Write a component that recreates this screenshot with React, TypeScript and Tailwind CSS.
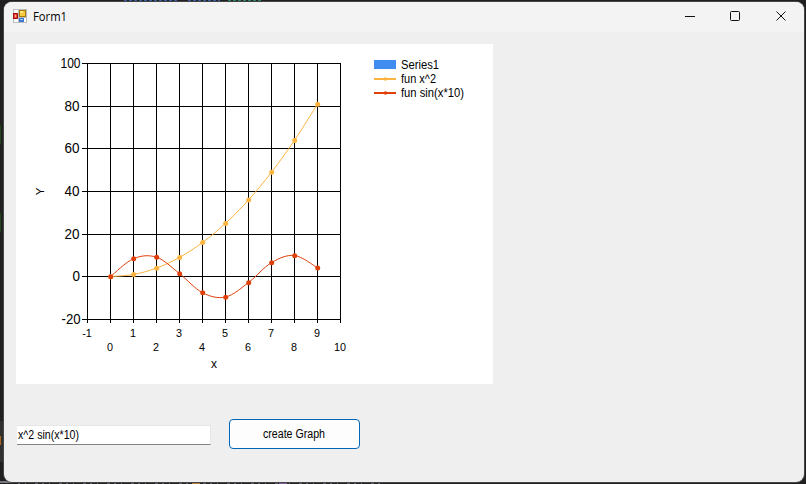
import React from "react";

const squares = [0, 1, 4, 9, 16, 25, 36, 49, 64, 81];
const sines = squares.map((_, x) => Math.sin(x) * 10);

const px = (x: number) => 94.5 + 23 * x;
const py = (v: number) => 232.6 - v * 2.13;

// Cardinal spline through the points, tension 0.5.
function spline(values: number[]) {
  const p = values.map((v, i) => [px(i), py(v)]);
  let d = `M${p[0][0]} ${p[0][1]}`;
  for (let i = 0; i < p.length - 1; i++) {
    const a = p[Math.max(0, i - 1)];
    const b = p[i];
    const c = p[i + 1];
    const e = p[Math.min(p.length - 1, i + 2)];
    d += ` C${b[0] + (c[0] - a[0]) / 6} ${b[1] + (c[1] - a[1]) / 6} ${c[0] - (e[0] - b[0]) / 6} ${c[1] - (e[1] - b[1]) / 6} ${c[0]} ${c[1]}`;
  }
  return d;
}

function Series({ values, color }: { values: number[]; color: string }) {
  return (
    <g>
      <path d={spline(values)} fill="none" stroke={color} strokeWidth="1" />
      {values.map((v, i) => (
        <circle key={i} cx={px(i) + 0.2} cy={py(v) + 0.1} r="2.5" fill={color} />
      ))}
    </g>
  );
}

const rows = [
  { y: 19, label: "100", x: 45, w: 20 },
  { y: 62, label: "80", x: 49, w: 15 },
  { y: 104, label: "60", x: 49, w: 15 },
  { y: 147, label: "40", x: 49, w: 15 },
  { y: 190, label: "20", x: 49, w: 15 },
  { y: 232, label: "0", x: 57, w: 7.5 },
  { y: 275, label: "-20", x: 46, w: 19 },
];

function Chart() {
  return (
    <svg width="350" height="340" className="block shrink-0 font-['Liberation_Sans',Arial,sans-serif]" fill="#000">
      <g shapeRendering="crispEdges">
        {rows.map((r) => (
          <rect key={r.label} x="66" y={r.y} width="259" height="1" />
        ))}
        {Array.from({ length: 12 }, (_, i) => (
          <rect key={i} x={71 + 23 * i} y="19" width="1" height="260" />
        ))}
      </g>
      {rows.map((r) => (
        <text key={r.label} x={r.x - 0.5} y={r.y + 5} fontSize="14" textLength={r.w} lengthAdjust="spacingAndGlyphs">
          {r.label}
        </text>
      ))}
      {Array.from({ length: 12 }, (_, i) => {
        const label = String(i - 1);
        return (
          <text key={i} x={71 + 23 * i} y={i % 2 ? 307 : 293} fontSize="10.8" textAnchor="middle">
            {label}
          </text>
        );
      })}
      <text x="198" y="324" fontSize="12" textAnchor="middle">x</text>
      <text transform="translate(28 147.5) rotate(-90)" fontSize="11.5" textAnchor="middle">Y</text>
      <Series values={squares} color="#fcb441" />
      <Series values={sines} color="#e0400a" />
    </svg>
  );
}

function Label({ text, width, size = 12 }: { text: string; width: number; size?: number }) {
  return (
    <svg width={width + 2} height="16" className="block shrink-0 overflow-visible">
      <text x="0" y="12" fontSize={size} textLength={width} lengthAdjust="spacingAndGlyphs">
        {text}
      </text>
    </svg>
  );
}

function LineKey({ color }: { color: string }) {
  return (
    <svg width="22" height="9" className="mb-[2px] block shrink-0" fill={color}>
      <rect y="4" width="22" height="2" shapeRendering="crispEdges" />
      <circle cx="11.5" cy="5" r="1.8" />
    </svg>
  );
}

function Legend() {
  return (
    <div className="flex flex-col pl-2 pt-[14px] font-['Liberation_Sans',Arial,sans-serif]">
      <div className="flex h-[14px] items-center gap-[5px]">
        <div className="mb-[2px] h-[9px] w-[22px] bg-[#418cf0]" />
        <Label text="Series1" width={38} />
      </div>
      <div className="flex h-[14px] items-center gap-[5px]">
        <LineKey color="#fcb441" />
        <Label text="fun x^2" width={35} />
      </div>
      <div className="flex h-[14px] items-center gap-[5px]">
        <LineKey color="#e0400a" />
        <Label text="fun sin(x*10)" width={63} />
      </div>
    </div>
  );
}

function FormIcon() {
  return (
    <svg width="14" height="14" className="mb-[2px] block shrink-0" shapeRendering="crispEdges">
      <rect width="14" height="14" fill="#b9bcc0" />
      <rect x="1" y="1" width="4" height="3" fill="#fff" />
      <rect x="1" y="10" width="4" height="3" fill="#fff" />
      <rect x="11" y="9" width="2" height="4" fill="#fff" />
      <rect x="0" y="4" width="5" height="6" fill="#a31515" />
      <rect x="1" y="5" width="3" height="4" fill="#e34434" />
      <rect x="2" y="6" width="1" height="2" fill="#ffb0a0" />
      <rect x="6" y="1" width="7" height="7" fill="#a97908" />
      <rect x="7" y="2" width="5" height="5" fill="#fccb3a" />
      <rect x="7" y="2" width="3" height="2" fill="#ffe48a" />
      <rect x="6" y="9" width="5" height="4" fill="#3b76cf" />
      <rect x="7" y="10" width="3" height="1" fill="#9cc5fa" />
    </svg>
  );
}

function TitleBar() {
  return (
    <div className="flex h-[30px] shrink-0 items-center bg-[#f3f3f3] pl-[9px] pr-[17px] font-['Open_Sans',sans-serif]">
      <FormIcon />
      <div className="ml-[6px]">
        <Label text="Form1" width={34} />
      </div>
      <svg width="102" height="12" className="mb-[2px] ml-auto block" fill="none" stroke="#111">
        <path d="M0 6.5h10" />
        <rect x="45.5" y="1.5" width="9" height="9" rx="1" />
        <path d="M91.5 1.5l9 9M100.5 1.5l-9 9" />
      </svg>
    </div>
  );
}

// Fragments of the editor that show around the window's edges.
function Backdrop() {
  return (
    <svg width="806" height="484" className="absolute inset-0">
      <rect width="806" height="484" fill="#202020" />
      <path d="M124 .5h54M188 .5h32" stroke="#355c9c" strokeDasharray="3 2" />
      <path d="M228 .5h35" stroke="#2f8068" strokeDasharray="3 2" />
      <rect y="125" width="1" height="19" fill="#23421d" />
      <rect y="213" width="1" height="19" fill="#23421d" />
      <rect y="421" width="4" height="41" fill="#303030" />
      <rect y="436" width="1" height="9" fill="#a86620" />
      <rect x="3" y="441" width="1" height="2" fill="#4774a8" />
      <rect y="481" width="12" height="2" fill="#77777d" />
      <path d="M18 483.5h362" stroke="#62626a" strokeDasharray="2 5 1 9 3 4" />
      <path d="M192 483.5h8" stroke="#b87b3b" />
      <path d="M279 483.5h8" stroke="#8060a0" />
    </svg>
  );
}

export default function App() {
  return (
    <div className="relative h-[484px] w-[806px] overflow-hidden pl-1 pt-[2px] font-['Liberation_Sans',Arial,sans-serif] text-black">
      <Backdrop />
      <div className="relative flex h-[480px] w-[800px] flex-col overflow-hidden rounded-lg bg-[#efefef] shadow-[0_0_0_1px_#454545]">
        <TitleBar />
        <div className="flex flex-col pl-3 pt-3">
          <div className="flex h-[340px] w-[477px] bg-white">
            <Chart />
            <Legend />
          </div>
          <div className="mt-[35px] flex items-start">
            <div className="ml-[1px] mt-[6px] flex h-5 w-[194px] items-center border-b border-r border-t border-b-[#858585] border-r-[#e6e6e6] border-t-[#e6e6e6] bg-white pl-[1px]">
              <Label text="x^2 sin(x*10)" width={61} />
            </div>
            <button className="ml-[18px] flex h-[30px] w-[131px] items-center justify-center rounded-[4px] border border-[#0067b8] bg-[#fdfdfd]">
              <Label text="create Graph" width={62} />
            </button>
          </div>
        </div>
      </div>
    </div>
  );
}
